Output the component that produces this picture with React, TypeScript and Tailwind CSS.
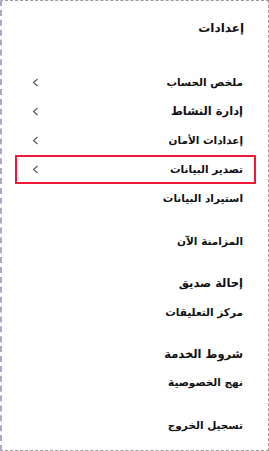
import React from 'react';

type Item = { label: string; chevron?: boolean; big?: boolean; active?: boolean };

const GROUPS: Item[][] = [
  [
    { label: 'ملخص الحساب', chevron: true },
    { label: 'إدارة النشاط', chevron: true, big: true },
    { label: 'إعدادات الأمان', chevron: true },
    { label: 'تصدير البيانات', chevron: true, active: true },
    { label: 'استيراد البيانات' },
  ],
  [{ label: 'المزامنة الآن' }],
  [{ label: 'إحالة صديق', big: true }, { label: 'مركز التعليقات' }],
  [{ label: 'شروط الخدمة', big: true }, { label: 'نهج الخصوصية' }],
  [{ label: 'تسجيل الخروج' }],
];

function Chevron() {
  return (
    <svg width="7" height="9" viewBox="0 0 7 9" className="shrink-0">
      <path d="M5.5 1 L1.5 4.5 L5.5 8" fill="none" stroke="#555" strokeWidth="1.1" />
    </svg>
  );
}

function Row({ item, first }: { item: Item; first: boolean }) {
  return (
    <div
      className={
        'flex items-center justify-between pr-[11px] pl-[15px] ' +
        (first ? 'h-[29px] ' : 'h-[28px] ') +
        (item.active ? 'border-2 border-[#f01838]' : 'border-2 border-transparent')
      }
    >
      <span
        className={
          'font-bold text-[#111] leading-none ' + (item.big ? 'text-[11.5px]' : 'text-[10.5px]')
        }
      >
        {item.label}
      </span>
      {item.chevron ? <Chevron /> : <span />}
    </div>
  );
}

export default function App() {
  return (
    <div
      dir="rtl"
      className="w-[269px] h-[451px] bg-white border border-dashed border-[#9a9a9a] border-l-2 border-l-[#a9a9c9] overflow-hidden"
      style={{ fontFamily: '"DejaVu Sans", sans-serif' }}
    >
      <div className="pr-[24px] pt-[18px] h-[67px]">
        <h1 className="text-[12px] font-bold text-[#111] leading-[18px]">إعدادات</h1>
      </div>
      <div className="flex flex-col gap-[14.5px] mr-[12px] ml-[13px]">
        {GROUPS.map((g, gi) => (
          <div key={gi} className="flex flex-col">
            {g.map((it) => (
              <Row key={it.label} item={it} first={gi === 0} />
            ))}
          </div>
        ))}
      </div>
    </div>
  );
}
